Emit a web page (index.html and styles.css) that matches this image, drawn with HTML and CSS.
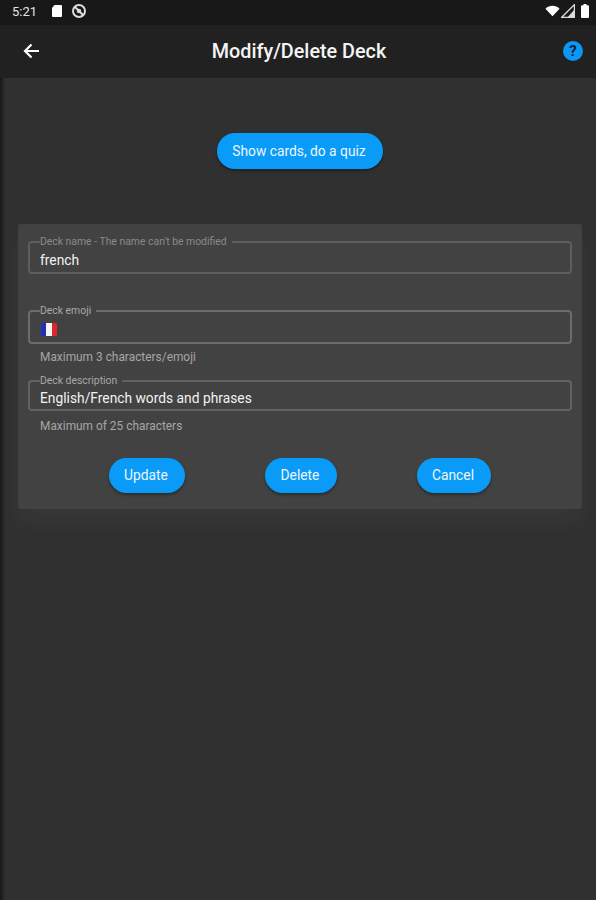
FILE: index.html
```html
<!DOCTYPE html>
<html lang="en">
<head>
<meta charset="utf-8">
<title>Modify/Delete Deck</title>
<link rel="stylesheet" href="styles.css">
</head>
<body>
<div class="screen">
  <header class="status">
    <div class="status-left">
      <span class="time">5:21</span>
      <svg class="st-sd" viewBox="0 0 12 14"><path d="M3.5 1H10a1 1 0 0 1 1 1v10a1 1 0 0 1-1 1H2a1 1 0 0 1-1-1V4z" fill="#fff"/></svg>
      <svg class="st-dnd" viewBox="0 0 16 16"><circle cx="8" cy="8" r="6" fill="none" stroke="#ddd" stroke-width="2"/><path d="M4 4l8 8" stroke="#ddd" stroke-width="2"/><circle cx="8" cy="8" r="2.2" fill="#ddd"/></svg>
    </div>
    <div class="status-right">
      <svg class="st-wifi" viewBox="0 0 16 12"><path d="M0.5 3.5C4.5-.5 11.500-.5 15.500 3.500L8 11.500z" fill="#fff"/></svg>
      <svg class="st-signal" viewBox="0 0 13 13"><path d="M12.500.5v12H.5z" fill="none" stroke="#ddd" stroke-width="1.200"/><path d="M12.500 5v7.500H6z" fill="#ddd"/></svg>
      <svg class="st-batt" viewBox="0 0 9 14"><path d="M3 0h3v1.200h1.500a1 1 0 0 1 1 1V13a1 1 0 0 1-1 1h-6a1 1 0 0 1-1-1V2.200a1 1 0 0 1 1-1H3z" fill="#fff"/></svg>
    </div>
  </header>
  <nav class="appbar">
    <svg class="back" viewBox="0 0 18 18"><path d="M17 9H3M9.500 2.500L3 9l6.500 6.500" fill="none" stroke="#fff" stroke-width="2.200"/></svg>
    <h1 class="title">Modify/Delete Deck</h1>
    <span class="help">?</span>
  </nav>
  <main class="content">
    <div class="quiz-row"><button class="btn btn-quiz">Show cards, do a quiz</button></div>
    <section class="card">
      <fieldset class="field field-first">
        <legend class="legend legend-dim">Deck name - The name can't be modified</legend>
        <span class="value value-first">french</span>
      </fieldset>
      <fieldset class="field field-emoji">
        <legend class="legend">Deck emoji</legend>
        <svg class="flag" viewBox="0 0 16 13"><rect x="0" y="0" width="5.500" height="13" rx="1.500" fill="#1f2fb8"/><rect x="10.500" y="0" width="5.500" height="13" rx="1.500" fill="#e0252b"/><rect x="5" y="0" width="6" height="13" fill="#f4f4f4"/></svg>
      </fieldset>
      <p class="hint hint-emoji">Maximum 3 characters/emoji</p>
      <fieldset class="field field-desc">
        <legend class="legend">Deck description</legend>
        <span class="value value-desc">English/French words and phrases</span>
      </fieldset>
      <p class="hint hint-desc">Maximum of 25 characters</p>
      <div class="actions">
        <button class="btn btn-update">Update</button>
        <button class="btn btn-delete">Delete</button>
        <button class="btn btn-cancel">Cancel</button>
      </div>
    </section>
  </main>
</div>
</body>
</html>
```

FILE: styles.css
```css
* { box-sizing: border-box; }
html, body { margin: 0; padding: 0; }
body { font-family: Roboto, "Liberation Sans", sans-serif; background: #303030; color: #fff; }
.screen { width: 596px; height: 900px; display: flex; flex-direction: column; overflow: hidden; }

.status { height: 25px; flex: none; background: #181818; display: flex; justify-content: space-between; align-items: center; padding: 0 6px 3px 12px; }
.status-left, .status-right { display: flex; align-items: center; }
.time { font-size: 13px; color: #e2e2e2; width: 39px; }
.st-sd { width: 12px; height: 14px; margin-right: 8px; }
.st-dnd { width: 16px; height: 16px; }
.st-wifi { width: 15px; height: 12px; margin-right: 1px; }
.st-signal { width: 14px; height: 14px; margin-right: 5px; }
.st-batt { width: 10px; height: 14px; }

.appbar { height: 53px; flex: none; background: #212121; display: flex; align-items: center; position: relative; padding: 0 13px 2px 22px; justify-content: space-between; }
.back { width: 18px; height: 18px; }
.title { margin: 0; padding: 1px 0 0 2px; font-size: 19.800px; font-weight: 500; color: #f4f4f4; position: absolute; left: 0; right: 0; text-align: center; }
.help { width: 20px; height: 20px; border-radius: 50%; background: #0a97f5; color: #123; font-size: 15px; font-weight: 700; display: flex; align-items: center; justify-content: center; position: relative; }

.content { flex: 1; background: linear-gradient(to right, #161616 0, #262626 3px, #303030 6px); padding: 55px 14px 0 18px; }
.quiz-row { display: flex; justify-content: center; margin-bottom: 55px; }
.btn { border: 0; height: 35px; border-radius: 18px; background: #0a9bf8; color: #eef6fc; font-family: inherit; font-size: 13.800px; padding: 0 2px 2px 0; box-shadow: 0 2px 3px rgba(0,0,0,.35); }
.btn-quiz { width: 166px; height: 36px; padding-bottom: 0; }
.btn-update { width: 76px; }
.btn-delete { width: 72px; }
.btn-cancel { width: 74px; }

.card { background: #424242; height: 285px; border-radius: 3px; padding: 12px 10px 0; box-shadow: 0 14px 24px rgba(255,255,255,.04); }
.field { margin: 0; padding: 0 10px; border: 2px solid #5e5e5e; border-radius: 4px; height: 38px; display: block; min-width: 0; }
.field-emoji { margin-top: 31px; height: 39px; border-color: #6c6c6c; }
.field-desc { margin-top: 11px; height: 36px; border-color: #626262; }
.legend { font-size: 10.400px; line-height: 12px; color: #a8a8a8; padding: 0 5px 0 0; margin-left: 0; }
.legend-dim { color: #8a8a8a; }
.value { display: block; font-size: 13.800px; line-height: 18px; color: #f2f2f2; margin-top: 1px; }
.value-first { margin-top: 3px; }
.value-desc { margin-top: 2px; }
.flag { display: block; width: 16px; height: 13px; margin: 6px 0 0 1px; }
.hint { margin: 0 0 0 12px; font-size: 11.900px; line-height: 14px; color: #a6a6a6; }
.hint-emoji { margin-top: 6px; }
.hint-desc { margin-top: 8px; }
.actions { display: flex; justify-content: space-between; padding: 0 81px; margin-top: 25px; }
```
